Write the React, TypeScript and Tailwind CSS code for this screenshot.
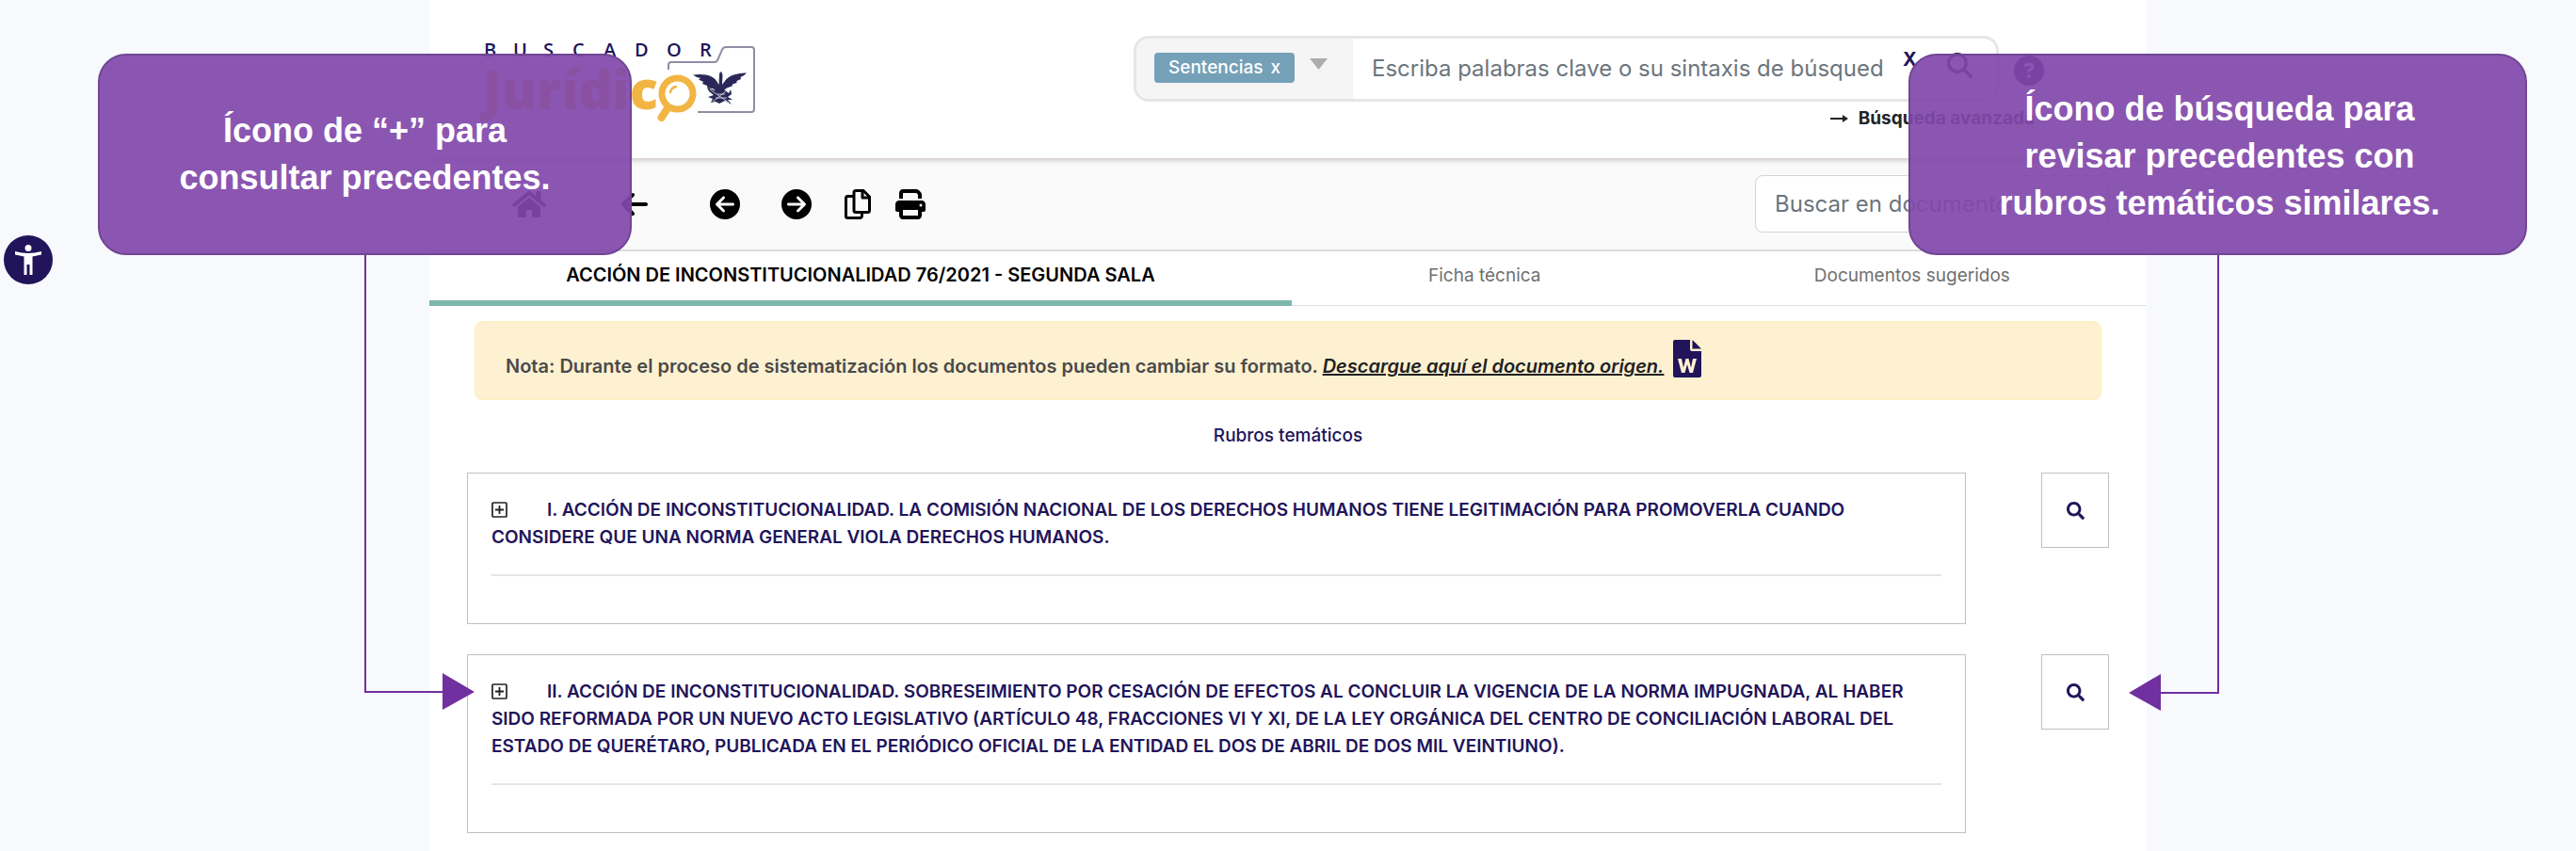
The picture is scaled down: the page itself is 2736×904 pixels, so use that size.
import { FaHome, FaSearch } from "react-icons/fa";
import { FaArrowLeft, FaCircleArrowLeft, FaCircleArrowRight, FaCircleQuestion, FaMagnifyingGlass, FaPrint } from "react-icons/fa6";

const rubros = [
  "I. ACCIÓN DE INCONSTITUCIONALIDAD. LA COMISIÓN NACIONAL DE LOS DERECHOS HUMANOS TIENE LEGITIMACIÓN PARA PROMOVERLA CUANDO CONSIDERE QUE UNA NORMA GENERAL VIOLA DERECHOS HUMANOS.",
  "II. ACCIÓN DE INCONSTITUCIONALIDAD. SOBRESEIMIENTO POR CESACIÓN DE EFECTOS AL CONCLUIR LA VIGENCIA DE LA NORMA IMPUGNADA, AL HABER SIDO REFORMADA POR UN NUEVO ACTO LEGISLATIVO (ARTÍCULO 48, FRACCIONES VI Y XI, DE LA LEY ORGÁNICA DEL CENTRO DE CONCILIACIÓN LABORAL DEL ESTADO DE QUERÉTARO, PUBLICADA EN EL PERIÓDICO OFICIAL DE LA ENTIDAD EL DOS DE ABRIL DE DOS MIL VEINTIUNO).",
];

function Logo() {
  return (
    <svg className="block h-[96px] w-[296px]" viewBox="510 36 296 96" role="img" aria-label="Buscador Jurídico">
      <text x="514 545 577 608 641 674 708 743" y="58" fill="#21145a" fontFamily="'Open Sans', sans-serif" fontSize="20" fontWeight="600">
        BUSCADOR
      </text>
      <text x="699" y="114" textAnchor="end" fill="#f2b544" fontFamily="'Open Sans', sans-serif" fontWeight="800" fontSize="56">
        Jurídic
      </text>
      <circle cx="719.5" cy="97.500" r="16.500" fill="#fff" stroke="#f2b544" strokeWidth="7" />
      <path d="M709 113L702.500 123" stroke="#f2b544" strokeWidth="8" strokeLinecap="round" />
      <path d="M712 96Q713 91 718 90" fill="none" stroke="#f2b544" strokeWidth="2.500" strokeLinecap="round" />
      <path d="M710 72V67Q710 64 713 64H759Q761 64 762 62L767 51Q768 48 771 48H798Q801 48 801 51V114Q801 117 798 117H741" fill="none" stroke="#8f8ca6" strokeWidth="2" />
      <g fill="#2b2859">
        <path d="M736 77.500Q743 76.500 750 77.500Q758 79 761 84L763.500 88L764 77Q764.500 73.500 766.500 74.500L767.500 78L767 88L770 84Q774 78.500 781 77Q787 75 793 75.500Q790 79 786.500 80L787 82L782.500 84L782.500 86L778 87.500L777.500 89.500L772 91.500L768.500 94L760 94L757 92L751.500 91.500L751 89L746 87L747 85L742 82.500L744 81Q739 80 736 77.500Z" />
        <path d="M759 94L769 93L774 97L776 93L777 98L773 101L778 104L773 104L777 109L770 105L764 108L760 106L755 107L757 103L752 101L758 99L753 95L751 91Z" />
      </g>
      <path d="M754 93L774 107M771 95L757 106M762 98H770M760 102H772" stroke="#fff" strokeWidth="0.700" />
    </svg>
  );
}

function CopyIcon() {
  return (
    <svg className="h-8 w-7" viewBox="0 0 28 32" fill="none" stroke="currentColor" strokeWidth="3" strokeLinejoin="round">
      <path d="M12 1.500H20L26.500 8V22.500Q26.500 24.500 24.500 24.500H12Q10 24.500 10 22.500V3.500Q10 1.500 12 1.500Z" />
      <path d="M19 2V9H26" />
      <path d="M10 7.500H3.500Q1.500 7.500 1.500 9.500V28.500Q1.500 30.500 3.500 30.500H16Q18.500 30.500 18.500 28V25" />
    </svg>
  );
}

function WordIcon() {
  return (
    <svg className="ml-[10px] h-10 w-[30px] text-[#21145a]" viewBox="0 0 30 40">
      <path d="M2 0H18V10Q18 12 20 12H30V38Q30 40 28 40H2Q0 40 0 38V2Q0 0 2 0Z" fill="currentColor" />
      <path d="M20.500 0L30 9.500H20.500Z" fill="currentColor" />
      <path d="M5 20H9L11 29.500L13.500 20H16.500L19 29.500L21 20H25L21 35H17.500L15 26L12.500 35H9Z" fill="#fdf1d2" />
    </svg>
  );
}

function PlusIcon() {
  return (
    <svg className="inline-block h-[17px] w-[17px] align-[-2px]" viewBox="0 0 17 17" fill="none" stroke="currentColor">
      <rect x="1" y="1" width="15" height="15" rx="1" strokeWidth="1.700" />
      <path d="M8.500 4V13M4 8.500H13" strokeWidth="1.800" />
    </svg>
  );
}

export default function App() {
  return (
    <div className="relative min-h-screen bg-[#f7f9fd] font-['Inter','Noto_Sans',sans-serif]">
      <main className="mx-auto min-h-screen w-2/3 bg-white">
        <header className="relative flex h-[168px] items-start justify-between pl-[54px] pr-[109px] pt-[38px] shadow-[0_2px_6px_rgba(60,20,20,0.25)] [clip-path:inset(0_0_-8px_0)]">
          <Logo />
          <div className="flex flex-col items-end">
            <div className="flex items-center gap-4">
              <form className="flex h-[70px] w-[919px] overflow-hidden rounded-2xl border-[3px] border-[#e6e6e6]">
                <div className="flex w-[230px] shrink-0 items-start gap-4 bg-[#f5f5f5] pl-[19px] pt-[15px]">
                  <button type="button" className="flex h-8 items-center gap-2 rounded-sm bg-[#74a0b8] px-[15px] text-[19px] font-medium text-white">
                    <span>Sentencias</span>
                    <span>x</span>
                  </button>
                  <svg className="mt-[6px] h-[12px] w-[19px]" viewBox="0 0 19 12"><path d="M0 0H19L9.500 12Z" fill="#adadad" /></svg>
                </div>
                <input aria-label="Palabras clave" className="ml-5 w-[544px] min-w-0 text-[24px] outline-none placeholder:text-[#6c757d]" placeholder="Escriba palabras clave o su sintaxis de búsqueda" />
                <button type="button" aria-label="Limpiar" className="ml-5 self-start pt-[8px] text-xl font-bold text-[#21145a]">X</button>
                <button type="button" aria-label="Buscar" className="ml-8 self-start pt-[15px] text-[27px] text-[#21145a]"><FaMagnifyingGlass /></button>
              </form>
              <button type="button" aria-label="Ayuda" className="pt-1 text-[32px] text-[#21145a]"><FaCircleQuestion /></button>
            </div>
            <a href="#avanzada" className="mr-[10px] mt-1 flex items-center gap-[10px] text-[19px] font-bold leading-[27px] text-[#212529]">
              <svg className="h-3 w-5" viewBox="0 0 20 12" fill="none" stroke="currentColor" strokeWidth="2"><path d="M0 6H17" /><path d="M13 2L19 6L13 10Z" fill="currentColor" strokeWidth="0" /></svg>
              Búsqueda avanzada
            </a>
          </div>
        </header>

        <div className="flex h-[99px] items-center border-b-2 border-[#dcdcdc] bg-[#fafafa] pl-[88px] pr-10 text-[32px] text-black">
          <button type="button" aria-label="Inicio" className="text-[36px]"><FaHome /></button>
          <button type="button" aria-label="Regresar" className="ml-[78px]"><FaArrowLeft /></button>
          <button type="button" aria-label="Anterior" className="ml-16"><FaCircleArrowLeft /></button>
          <button type="button" aria-label="Siguiente" className="ml-[44px]"><FaCircleArrowRight /></button>
          <button type="button" aria-label="Copiar" className="ml-[35px]"><CopyIcon /></button>
          <button type="button" aria-label="Imprimir" className="ml-[26px]"><FaPrint /></button>
          <input aria-label="Buscar en documento" placeholder="Buscar en documento" className="ml-auto h-[61px] w-[376px] rounded-lg border border-[#ced4da] bg-white px-5 text-[24px] placeholder:text-[#6c757d]" />
        </div>

        <nav className="flex h-[58px] border-b border-[#dee2e6] text-center text-[19px] leading-[51px] text-[#6f6f6f]">
          <a href="#documento" className="-mb-px flex-auto border-b-[6px] border-[#7cb7ad] text-[20px] font-semibold text-black">ACCIÓN DE INCONSTITUCIONALIDAD 76/2021 - SEGUNDA SALA</a>
          <a href="#ficha" className="flex-auto">Ficha técnica</a>
          <a href="#sugeridos" className="flex-auto">Documentos sugeridos</a>
        </nav>

        <div className="mx-12 mt-4 flex h-[84px] items-start rounded-lg border border-[#ffeeba] bg-[#fdf1d2] px-8 pt-[19px] text-[20px] font-semibold text-[#4a4a4a]">
          <p className="pt-[14px] leading-[29px]">
            Nota: Durante el proceso de sistematización los documentos pueden cambiar su formato.{" "}
            <a href="#origen" className="italic text-[#212121] underline">Descargue aquí el documento origen.</a>
          </p>
          <WordIcon />
        </div>

        <h1 className="mt-[23px] text-center text-[19px] font-medium leading-[29px] text-[#21145a]">Rubros temáticos</h1>

        <section className="mt-[25px] flex flex-col gap-8 px-10">
          {rubros.map((texto) => (
            <div key={texto} className="flex items-start gap-20">
              <article className="flex-1 border border-[#c0c0c0] px-[25px] pb-[50px] pt-6">
                <p className="text-[19px] font-semibold leading-[29px] text-[#21145a]">
                  <button type="button" aria-label="Consultar precedentes" className="mr-[42px] text-[#222]"><PlusIcon /></button>
                  {texto}
                </p>
                <hr className="mt-[25px] border-t-2 border-[#e5e5e5]" />
              </article>
              <button type="button" aria-label="Revisar precedentes similares" className="flex h-20 w-[72px] items-center justify-center border border-[#c0c0c0] text-[19px] text-[#21145a]"><FaSearch /></button>
            </div>
          ))}
        </section>
      </main>

      <button type="button" aria-label="Accesibilidad" className="absolute left-1 top-[250px] flex h-[52px] w-[52px] items-center justify-center rounded-full bg-[#21145a] text-white">
        <svg className="h-8 w-7" viewBox="0 0 28 32" fill="currentColor"><circle cx="14" cy="3.500" r="3.500" /><path d="M0 7Q14 11 28 7V10.500L18.500 12.500V32H15.500V21H12.500V32H9.500V12.500L0 10.500Z" /></svg>
      </button>

      <svg className="pointer-events-none absolute left-[386px] top-[270px] h-[490px] w-[120px]" viewBox="0 0 120 490">
        <path d="M2 0V465H86" fill="none" stroke="#7030a0" strokeWidth="2" />
        <path d="M84 445L118 465L84 484Z" fill="#7030a0" />
      </svg>
      <svg className="pointer-events-none absolute right-[378px] top-[270px] h-[490px] w-[100px]" viewBox="0 0 100 490">
        <path d="M98 0V466H36" fill="none" stroke="#7030a0" strokeWidth="2" />
        <path d="M37 446L3 466L37 485Z" fill="#7030a0" />
      </svg>
      <aside className="absolute left-[104px] top-[57px] flex h-[214px] w-[567px] items-center justify-center rounded-[30px] border-2 border-[#704694] bg-[#8148aa]/92 text-center font-['Liberation_Sans',sans-serif] text-[36px] font-bold leading-[50px] text-white">
        <p>Ícono de “+” para<br />consultar precedentes.</p>
      </aside>
      <aside className="absolute right-[52px] top-[57px] flex h-[214px] w-[657px] items-center justify-center rounded-[30px] border-2 border-[#704694] bg-[#8148aa]/92 pl-1 pt-1 text-center font-['Liberation_Sans',sans-serif] text-[36px] font-bold leading-[50px] text-white">
        <p>Ícono de búsqueda para<br />revisar precedentes con<br />rubros temáticos similares.</p>
      </aside>
    </div>
  );
}
